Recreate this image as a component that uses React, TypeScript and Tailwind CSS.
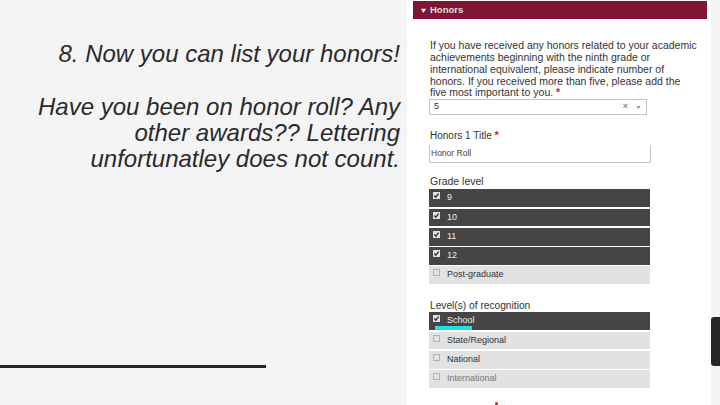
import React from "react";

function Box({ on }: { on: boolean }) {
  return (
    <span className={`w-[7px] h-[7px] flex items-center justify-center shrink-0 border ${on ? "bg-[#e2e2e2] border-[#e2e2e2]" : "bg-[#e2e2e2] border-[#b4b4b4]"}`}>
      {on && (
        <svg viewBox="0 0 7 7" className="w-[7px] h-[7px] shrink-0">
          <path d="M1.3 3.6 L2.8 5.2 L5.6 1.6" fill="none" stroke="#333" strokeWidth="1.4" />
        </svg>
      )}
    </span>
  );
}

function Row({ label, on, h = "h-[18px]", mb = "mb-[1px]", cyan = false, faint = false }: { label: string; on: boolean; h?: string; mb?: string; cyan?: boolean; faint?: boolean }) {
  return (
    <div className={`relative w-[221px] ${h} ${mb} flex items-start gap-[7px] pl-[4px] pt-[1px] text-[9px] leading-[11px] ${on ? "bg-[#454545] text-[#eeeeee]" : "bg-[#e2e2e2] " + (faint ? "text-[#777777]" : "text-[#333333]")}`}>
      <span className="pt-[2px]"><Box on={on} /></span>
      <span className="pt-[2px]">{label}</span>
      {cyan && <span className="absolute left-[6px] top-[14px] w-[37px] h-[4px] bg-[#22dfe6]" />}
    </div>
  );
}

export default function App() {
  return (
    <div className="w-[720px] h-[405px] overflow-hidden flex bg-[#f4f4f4] font-['Liberation_Sans',Arial,sans-serif]">
      <div className="w-[407px] shrink-0 flex flex-col">
        <div className="pt-[41px] pr-[7px] text-right italic text-[24px] leading-[26px] text-[#2a2a2a]">
          <p>8. Now you can list your honors!</p>
          <p className="mt-[27px]">Have you been on honor roll? Any<br />other awards?? Lettering<br />unfortunatley does not count.</p>
        </div>
        <div className="mt-[193px] w-[266px] h-[3px] bg-[#262626]" />
      </div>

      <div className="w-[304px] shrink-0 h-full bg-white pt-[1px] pl-[6px] flex flex-col items-start text-[#333333] overflow-hidden">
        <div className="w-[294px] h-[20px] bg-[#7f1734] flex items-center pl-[8px] gap-[4px] text-[9.5px] font-bold text-[#e9dbe0]">
          <svg viewBox="0 0 6 6" className="w-[5px] h-[5px]"><path d="M0 1 L6 1 L3 6 Z" fill="#ffffff" /></svg>
          <span>Honors</span>
        </div>
        <div className="ml-[16px] mt-[21px]">
          <p className="pl-[1px] whitespace-nowrap text-[10.5px] leading-[11.7px]">
            If you have received any honors related to your academic<br />achievements beginning with the ninth grade or<br />international equivalent, please indicate number of<br />honors. If you received more than five, please add the<br />five most important to you. <span className="text-[#d0202c] font-bold">*</span>
          </p>
          <div className="w-[218px] h-[16px] border border-[#c4c4c4] bg-white flex items-center pl-[4px] pr-[5px] text-[9px]">
            <span className="flex-1">5</span>
            <span className="text-[#888888] text-[9px] font-bold mr-[8px]">×</span>
            <svg viewBox="0 0 6 4" className="w-[5px] h-[3px]"><path d="M0 0 L6 0 L3 4 Z" fill="#9a9a9a" /></svg>
          </div>
          <p className="pl-[1px] mt-[14px] text-[10px] leading-[12px]">Honors 1 Title <span className="text-[#d0202c] font-bold text-[11px]">*</span></p>
          <div className="mt-[3px] w-[222px] h-[18px] border-x border-b border-[#c4c4c4] bg-white flex items-center pl-[1px] text-[8.5px] font-medium text-[#444444]">Honor Roll</div>
          <p className="pl-[1px] mt-[12px] mb-[2px] text-[10.5px] leading-[12px]">Grade level</p>
          <Row label="9" on mb="mb-[2px]" />
          <Row label="10" on h="h-[17px]" mb="mb-[2px]" />
          <Row label="11" on mb="mb-[1px]" />
          <Row label="12" on mb="mb-[1px]" />
          <Row label="Post-graduate" on={false} mb="mb-[16px]" />
          <p className="pl-[1px] text-[10.2px] leading-[12px]">Level(s) of recognition</p>
          <Row label="School" on cyan mb="mb-[2px]" />
          <Row label="State/Regional" on={false} h="h-[17px]" mb="mb-[2px]" />
          <Row label="National" on={false} />
          <Row label="International" on={false} faint />
          <div className="mt-[14px] ml-[66px] h-[3px] w-[3px] bg-[#d0202c] rounded-full" />
        </div>
      </div>

      <div className="relative flex-1">
        <div className="absolute left-0 top-[317px] w-[9px] h-[49px] bg-[#262626] rounded-l-[3px]" />
      </div>
    </div>
  );
}
